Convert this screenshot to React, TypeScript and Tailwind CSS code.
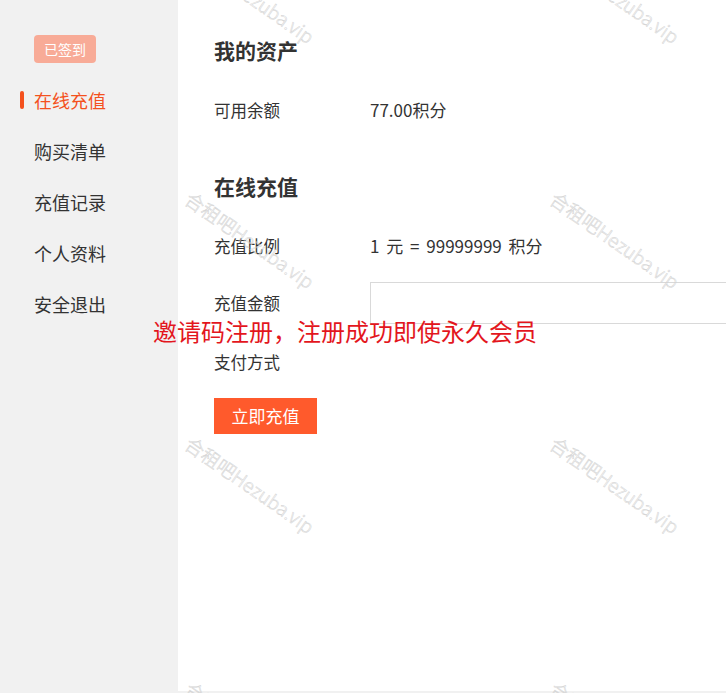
import React from 'react';

const menu = ['在线充值', '购买清单', '充值记录', '个人资料', '安全退出'];

const marks = [
  { x: 250, y: -5 },
  { x: 615, y: -5 },
  { x: 250, y: 240 },
  { x: 615, y: 240 },
  { x: 250, y: 485 },
  { x: 615, y: 485 },
  { x: 250, y: 730 },
  { x: 615, y: 730 },
];

export default function App() {
  return (
    <div
      className="relative flex h-[693px] w-full overflow-hidden text-[#333]"
      style={{ fontFamily: '"Noto Sans CJK SC", "Noto Sans", sans-serif' }}
    >
      {/* sidebar */}
      <aside className="w-[178px] shrink-0 bg-[#f1f1f1] pt-[35px]">
        <div className="ml-[34px] inline-flex h-[28px] items-center rounded-sm bg-[#f8ab97] px-[10px] text-[14px] text-white">
          已签到
        </div>
        <ul className="mt-[12px]">
          {menu.map((m, i) => (
            <li key={m} className="relative flex h-[51px] items-center pl-[34px] text-[18px]">
              {i === 0 && (
                <span className="absolute left-[20px] top-[16px] h-[18px] w-[4px] rounded-full bg-[#f4511e]" />
              )}
              <span className={i === 0 ? 'text-[#f4511e]' : 'text-[#333]'}>{m}</span>
            </li>
          ))}
        </ul>
      </aside>

      {/* main */}
      <main className="flex-1 overflow-hidden border-b-2 border-[#f1f1f1] bg-white pl-[36px] pt-[36px]">
        <h2 className="h-[28px] text-[21px] font-bold leading-[28px]">我的资产</h2>
        <div className="mt-[26px] flex h-[40px] items-center">
          <span className="w-[156px] text-[16.5px]">可用余额</span>
          <span className="text-[17px]">77.00积分</span>
        </div>

        <h2 className="mt-[42px] h-[28px] text-[21px] font-bold leading-[28px]">在线充值</h2>
        <div className="mt-[26px] flex h-[40px] items-center">
          <span className="w-[156px] shrink-0 text-[16.5px]">充值比例</span>
          <span className="text-[17px] [word-spacing:3px]">1 元 = 99999999 积分</span>
        </div>
        <div className="mt-[16px] flex h-[42px] items-center">
          <span className="w-[156px] shrink-0 text-[16.5px]">充值金额</span>
          <div className="h-[42px] w-[420px] shrink-0 border border-[#d9d9d9]" />
        </div>
        <div className="mt-[18px] flex h-[40px] items-center">
          <span className="w-[156px] text-[16.5px]">支付方式</span>
        </div>
        <button className="mt-[16px] h-[36px] w-[103px] bg-[#ff5a2c] text-[17px] text-white">立即充值</button>
      </main>

      {/* notice */}
      <div className="pointer-events-none absolute left-[153px] top-[315px] text-[24px] leading-[32px] text-[#e3161d]">
        邀请码注册，注册成功即使永久会员
      </div>

      {/* watermark */}
      {marks.map((p, i) => (
        <div
          key={i}
          className="pointer-events-none absolute -translate-x-1/2 -translate-y-1/2 rotate-[35deg] whitespace-nowrap text-[19px] font-light text-transparent [-webkit-text-stroke:0.5px_#d2d2d2]"
          style={{ left: p.x, top: p.y }}
        >
          合租吧Hezuba.vip
        </div>
      ))}
    </div>
  );
}
